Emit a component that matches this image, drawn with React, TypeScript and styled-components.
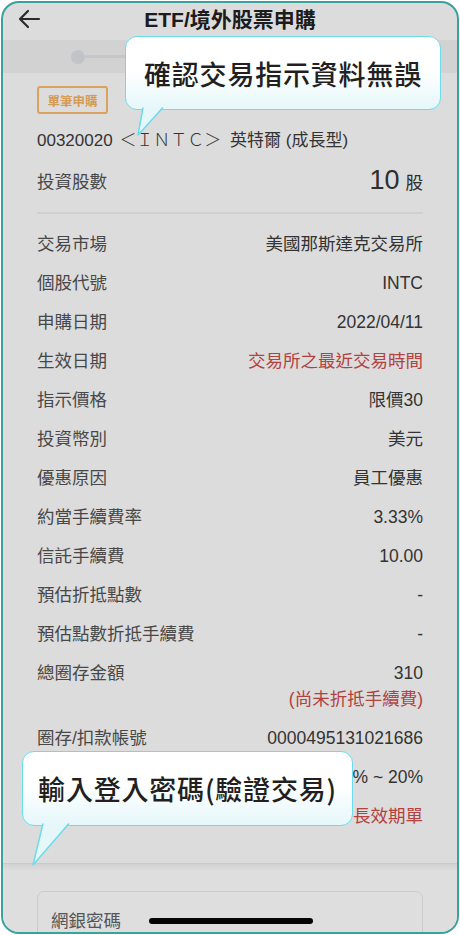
import React from "react"
import styled, { createGlobalStyle } from "styled-components"

const GlobalStyle = createGlobalStyle`
  html, body {
    margin: 0;
    padding: 0;
    background: #ffffff;
  }
  body {
    font-family: "Liberation Sans", "Noto Sans CJK TC", sans-serif;
  }
`

const Phone = styled.div`
  position: relative;
  box-sizing: border-box;
  margin: 1px;
  width: 458px;
  height: 933px;
  border: 2px solid #3aa29c;
  border-radius: 18px;
  background: #dcdcdc;
  overflow: hidden;
  display: flex;
  flex-direction: column;
`

const Header = styled.div`
  position: relative;
  height: 37px;
  flex-shrink: 0;
  display: flex;
  align-items: center;
  justify-content: center;
`

const BackButton = styled.div`
  position: absolute;
  left: 13px;
  top: 3px;
  width: 26px;
  height: 26px;
  display: flex;
  align-items: center;
  justify-content: center;
`

const Title = styled.div`
  font-size: 21px;
  font-weight: 700;
  color: #1c1c1c;
  margin-top: -8px;
`

const Stepper = styled.div`
  height: 33px;
  flex-shrink: 0;
  background: #d2d2d2;
  display: flex;
  align-items: center;
  padding-left: 68px;
`

const StepDot = styled.div`
  width: 14px;
  height: 14px;
  border-radius: 50%;
  background: #c0c3c8;
  flex-shrink: 0;
`

const StepLine = styled.div`
  height: 3px;
  width: 140px;
  background: #c4c6c9;
`

const Content = styled.div`
  padding: 13px 34px 28px 34px;
  display: flex;
  flex-direction: column;
  border-bottom: 1px solid #c9c9c9;
`

const Badge = styled.div`
  align-self: flex-start;
  box-sizing: border-box;
  height: 28px;
  width: 71px;
  border: 2px solid #d9a35d;
  border-radius: 3px;
  color: #d39b55;
  font-size: 12.5px;
  font-weight: 700;
  display: flex;
  align-items: center;
  justify-content: center;
`

const Product = styled.div`
  margin-top: 14px;
  line-height: 26px;
  font-size: 17px;
  color: #333333;
  white-space: nowrap;
`

const Ticker = styled.span`
  font-weight: 300;
  margin: 0 4px 0 2px;
`

const SharesRow = styled.div`
  margin-top: 6px;
  height: 40px;
  display: flex;
  align-items: center;
  justify-content: space-between;
`

const Label = styled.div`
  font-size: 17.5px;
  color: #484848;
  white-space: nowrap;
`

const SharesValue = styled.div`
  display: flex;
  align-items: baseline;
  gap: 6px;
  color: #2e2e2e;
`

const BigNumber = styled.span`
  font-size: 27px;
`

const Unit = styled.span`
  font-size: 17.5px;
`

const Divider = styled.div`
  margin-top: 12px;
  height: 2px;
  background: #d0d0d0;
`

const Rows = styled.div`
  margin-top: 10px;
  display: flex;
  flex-direction: column;
`

const Row = styled.div`
  display: flex;
  justify-content: space-between;
  align-items: flex-start;
  padding: 6.5px 0;
  line-height: 26px;
`

const Value = styled.div<{ $red?: boolean }>`
  display: flex;
  flex-direction: column;
  align-items: flex-end;
  margin-left: auto;
  font-size: 17.5px;
  color: ${(p) => (p.$red ? "#b3423f" : "#333333")};
  white-space: nowrap;
`

const Note = styled.span`
  color: #b3423f;
`

const BottomArea = styled.div`
  flex: 1;
  background: linear-gradient(#d2d2d2 0px, #dedede 7px, #dedede 100%);
  padding: 27px 34px 0 34px;
`

const PasswordCard = styled.div`
  box-sizing: border-box;
  height: 80px;
  border: 1px solid #cbcbcb;
  border-radius: 7px;
  padding: 16px 13px;
`

const CardLabel = styled.div`
  font-size: 17.5px;
  line-height: 26px;
  color: #555555;
`

const HomeBar = styled.div`
  position: absolute;
  left: 146px;
  top: 915px;
  width: 164px;
  height: 6px;
  border-radius: 3px;
  background: #050505;
`

const Bubble = styled.div<{ $left: number; $top: number; $width: number; $height: number }>`
  position: absolute;
  left: ${(p) => p.$left}px;
  top: ${(p) => p.$top}px;
  width: ${(p) => p.$width}px;
  height: ${(p) => p.$height}px;
  box-sizing: border-box;
  border: 1.5px solid #6cdcec;
  border-radius: 12px;
  background: linear-gradient(#ffffff 0%, #ffffff 45%, #e6f7fa 100%);
  display: flex;
  align-items: center;
  justify-content: center;
  font-family: "Noto Sans CJK TC", sans-serif;
  font-size: 27px;
  font-weight: 500;
  color: #231f20;
  white-space: nowrap;
  letter-spacing: 0.8px;
`

const Tail = styled.svg`
  position: absolute;
  left: 0;
  top: 100%;
  margin-top: -2px;
  overflow: visible;
`

type TailProps = { baseLeft: number; baseRight: number; tipX: number; tipY: number }

function BubbleTail({ baseLeft, baseRight, tipX, tipY }: TailProps) {
  return (
    <Tail width={1} height={1}>
      <polygon points={`${baseLeft},0 ${baseRight},0 ${tipX},${tipY}`} fill="#e6f7fa" />
      <polyline
        points={`${baseLeft},0.5 ${tipX},${tipY} ${baseRight},0.5`}
        fill="none"
        stroke="#6cdcec"
        strokeWidth={1.5}
        strokeLinejoin="round"
      />
    </Tail>
  )
}

// the last two labels sit under the lower callout in the screenshot
const rows: { label: string; value: string; red?: boolean; note?: string }[] = [
  { label: "交易市場", value: "美國那斯達克交易所" },
  { label: "個股代號", value: "INTC" },
  { label: "申購日期", value: "2022/04/11" },
  { label: "生效日期", value: "交易所之最近交易時間", red: true },
  { label: "指示價格", value: "限價30" },
  { label: "投資幣別", value: "美元" },
  { label: "優惠原因", value: "員工優惠" },
  { label: "約當手續費率", value: "3.33%" },
  { label: "信託手續費", value: "10.00" },
  { label: "預估折抵點數", value: "-" },
  { label: "預估點數折抵手續費", value: "-" },
  { label: "總圈存金額", value: "310", note: "(尚未折抵手續費)" },
  { label: "圈存/扣款帳號", value: "0000495131021686" },
  { label: "", value: "% ~ 20%" },
  { label: "", value: "長效期單", red: true },
]

export default function App() {
  return (
    <>
      <GlobalStyle />
      <Phone>
        <Header>
          <BackButton>
            <svg width="24" height="20" viewBox="0 0 24 20">
              <path
                d="M22 10H3M11 2L3 10l8 8"
                fill="none"
                stroke="#2a2a2a"
                strokeWidth={2.2}
                strokeLinecap="round"
                strokeLinejoin="round"
              />
            </svg>
          </BackButton>
          <Title>ETF/境外股票申購</Title>
        </Header>
        <Stepper>
          <StepDot />
          <StepLine />
        </Stepper>
        <Content>
          <Badge>單筆申購</Badge>
          <Product>
            00320020 <Ticker>＜ＩＮＴＣ＞</Ticker> 英特爾 (成長型)
          </Product>
          <SharesRow>
            <Label>投資股數</Label>
            <SharesValue>
              <BigNumber>10</BigNumber>
              <Unit>股</Unit>
            </SharesValue>
          </SharesRow>
          <Divider />
          <Rows>
            {rows.map((r, i) => (
              <Row key={i}>
                {r.label && <Label>{r.label}</Label>}
                <Value $red={r.red}>
                  <span>{r.value}</span>
                  {r.note && <Note>{r.note}</Note>}
                </Value>
              </Row>
            ))}
          </Rows>
        </Content>
        <BottomArea>
          <PasswordCard>
            <CardLabel>網銀密碼</CardLabel>
          </PasswordCard>
        </BottomArea>
        <HomeBar />
        <Bubble $left={122} $top={33} $width={316} $height={74}>
          確認交易指示資料無誤
          <BubbleTail baseLeft={17} baseRight={37} tipX={12} tipY={28} />
        </Bubble>
        <Bubble $left={19} $top={748} $width={331} $height={75}>
          輸入登入密碼(驗證交易)
          <BubbleTail baseLeft={20} baseRight={46} tipX={10} tipY={42} />
        </Bubble>
      </Phone>
    </>
  )
}
